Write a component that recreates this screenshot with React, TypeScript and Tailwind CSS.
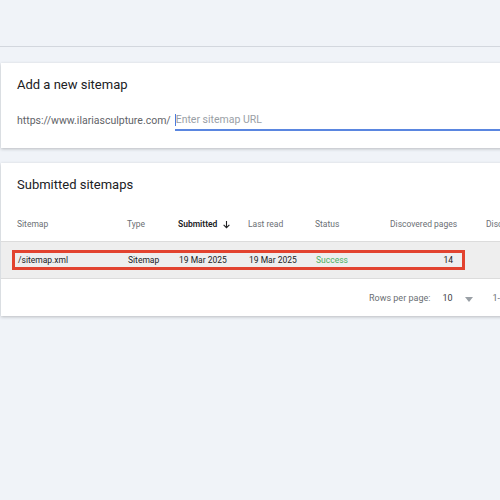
const headers = [
  { label: "Sitemap", w: "w-[110px]" },
  { label: "Type", w: "w-[51px]" },
  { label: "Submitted", w: "w-[70px]", active: true },
  { label: "Last read", w: "w-[67px]" },
  { label: "Status", w: "w-[75px]" },
];

export default function App() {
  return (
    <div className="w-[500px] h-[500px] overflow-hidden bg-[#f0f3f8] font-['Roboto',sans-serif]">
      {/* top strip */}
      <div className="h-[47px] border-b border-[#d3d7de]" />

      <div className="pt-[16px] pl-px flex flex-col gap-[15px]">
        {/* Add a new sitemap */}
        <div className="w-[560px] h-[85px] bg-white shadow-[0_1px_3px_rgba(60,64,67,0.3)] px-4 pt-[13px]">
          <h2 className="text-[13px] text-[#202124] leading-[18px]">Add a new sitemap</h2>
          <div className="flex items-end mt-[19px]">
            <span className="text-[10.5px] text-[#5f6368] leading-[14px] pb-[3px]">
              https://www.ilariasculpture.com/
            </span>
            <div className="ml-[4px] flex-1 flex flex-col">
              <div className="flex items-center pb-[2px]">
                <span className="w-px h-[12px] bg-[#4a7be0]" />
                <span className="text-[10.5px] text-[#9aa0a6] leading-[14px]">Enter sitemap URL</span>
              </div>
              <div className="h-[2px] bg-[#5a86e0]" />
            </div>
          </div>
        </div>

        {/* Submitted sitemaps */}
        <div className="w-[560px] h-[153px] bg-white shadow-[0_1px_3px_rgba(60,64,67,0.3)]">
          <h2 className="px-4 pt-[13px] text-[13px] text-[#202124] leading-[18px]">Submitted sitemaps</h2>

          {/* header row */}
          <div className="mt-[14px] h-[34px] flex items-center pl-4 border-b border-[#dcdcdc] text-[8.5px] text-[#6b6f74] whitespace-nowrap">
            {headers.map((h) => (
              <div key={h.label} className={`${h.w} flex items-center shrink-0`}>
                {h.active ? (
                  <span className="flex items-center gap-[5px] font-semibold text-[#202124]">
                    Submitted
                    <svg width="9" height="9" viewBox="0 0 10 10" fill="none" stroke="#202124" strokeWidth="1.2">
                      <path d="M5 1v7.5M1.8 5.3 5 8.5l3.2-3.2" />
                    </svg>
                  </span>
                ) : (
                  h.label
                )}
              </div>
            ))}
            <div className="w-[62px] shrink-0 text-right">Discovered pages</div>
            <div className="ml-[34px] shrink-0">Discovered videos</div>
          </div>

          {/* data row */}
          <div className="h-[37px] bg-[#eeeeee] border-b border-[#dcdcdc] flex items-center pl-[11px]">
            <div className="w-[453px] h-[20px] border-[3px] border-[#e2432f] flex items-center pl-[3px] text-[8.5px] text-[#202124] whitespace-nowrap">
              <div className="w-[110px] shrink-0">/sitemap.xml</div>
              <div className="w-[51px] shrink-0">Sitemap</div>
              <div className="w-[70px] shrink-0">19 Mar 2025</div>
              <div className="w-[67px] shrink-0">19 Mar 2025</div>
              <div className="w-[75px] shrink-0 text-[#4caf62]">Success</div>
              <div className="w-[62px] shrink-0 text-right">14</div>
            </div>
          </div>

          {/* footer */}
          <div className="h-[37px] pt-[3px] flex items-center pl-[368px] text-[9px] text-[#6b6f74] whitespace-nowrap">
            <span>Rows per page:</span>
            <span className="ml-[12px] text-[#3c4043]">10</span>
            <svg width="8" height="5" viewBox="0 0 8 5" className="ml-[12px]">
              <path d="M0 0h8L4 5z" fill="#9aa0a6" />
            </svg>
            <span className="ml-[20px]">1-1 of 1</span>
          </div>
        </div>
      </div>
    </div>
  );
}
